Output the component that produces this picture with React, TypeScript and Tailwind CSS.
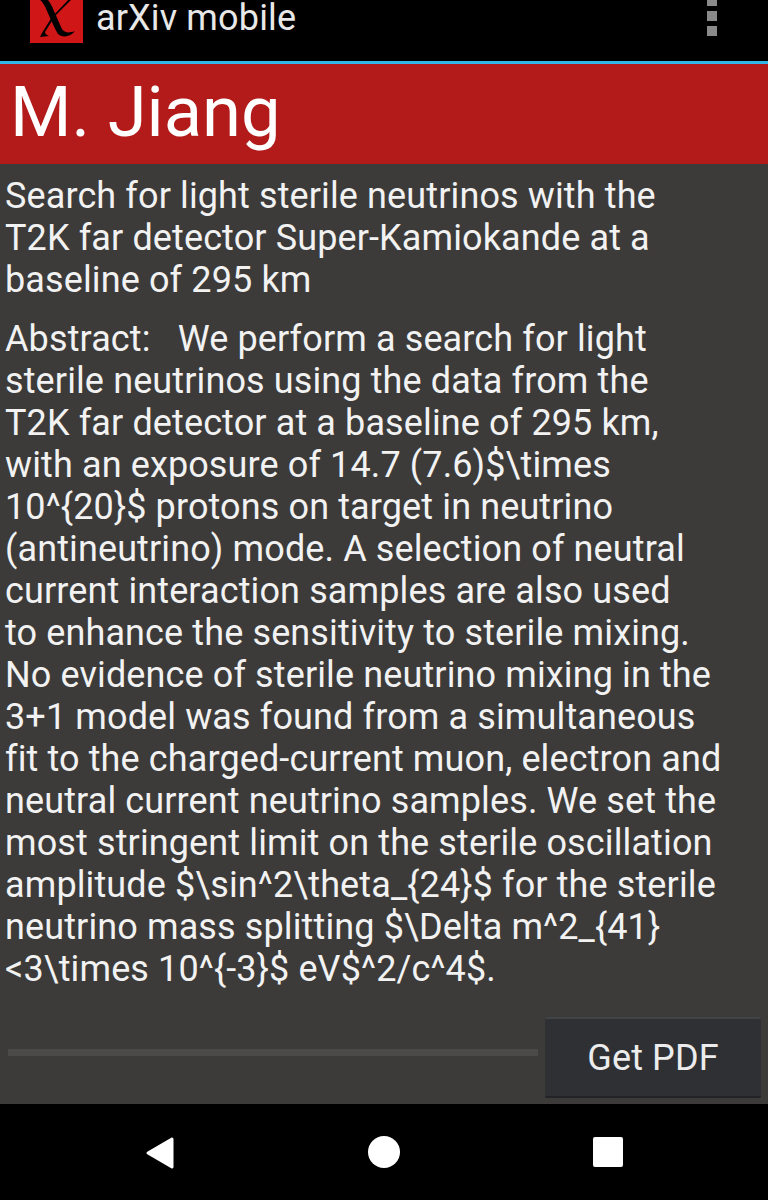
const lines = [
  "Abstract:\u00a0\u00a0 We perform a search for light",
  "sterile neutrinos using the data from the",
  "T2K far detector at a baseline of 295 km,",
  "with an exposure of 14.7 (7.6)$\\times",
  "10^{20}$ protons on target in neutrino",
  "(antineutrino) mode. A selection of neutral",
  "current interaction samples are also used",
  "to enhance the sensitivity to sterile mixing.",
  "No evidence of sterile neutrino mixing in the",
  "3+1 model was found from a simultaneous",
  "fit to the charged-current muon, electron and",
  "neutral current neutrino samples. We set the",
  "most stringent limit on the sterile oscillation",
  "amplitude $\\sin^2\\theta_{24}$ for the sterile",
  "neutrino mass splitting $\\Delta m^2_{41}",
  "<3\\times 10^{-3}$ eV$^2/c^4$.",
];

function Logo() {
  return (
    <svg width="53" height="43" viewBox="0 0 53 43" className="bg-[#d01616] shrink-0">
      <path d="M9 -1 H17 C20 2 22 6 24 11 L31 27 C33 32 37 34 45 31 C41 37 32 38 28 34 C25 29 21 20 17 11 C15 6 13 2 9 -1 Z" fill="#000" />
      <path d="M43 -2 L25 16 L15 32 C15 34 17 35 19 36 L10 37 L12 33 L22 17 L40 -2 Z" fill="#000" />
    </svg>
  );
}

export default function App() {
  return (
    <div className="w-[768px] h-[1200px] flex flex-col bg-[#3c3b3a] font-['Roboto',sans-serif] overflow-hidden">
      <header className="h-[61px] bg-black flex items-start pl-[30px] pr-[51px] shrink-0">
        <Logo />
        <span className="ml-[13px] text-[36px] leading-[36px] tracking-[0.15px] text-[#e8e8e8]">arXiv mobile</span>
        <div className="ml-auto flex flex-col gap-[5px] -mt-[4px]">
          <div className="w-[10px] h-[10px] bg-[#8a8a8a]" />
          <div className="w-[10px] h-[10px] bg-[#8a8a8a]" />
          <div className="w-[10px] h-[10px] bg-[#8a8a8a]" />
        </div>
      </header>
      <div className="h-[3px] bg-[#33b5e5] shrink-0" />
      <div className="h-[100px] bg-[#b31a1a] shrink-0 flex items-start pl-[10px] pt-[2px]">
        <h1 className="text-[70.5px] leading-[92px] text-white font-normal">M. Jiang</h1>
      </div>

      <main className="flex-1 flex flex-col px-[5px] pt-[11px] text-[36px] leading-[42px] tracking-[0.12px] text-[#f2f2f2]">
        <h2 className="font-normal whitespace-pre-line">
          {"Search for light sterile neutrinos with the\nT2K far detector Super-Kamiokande at a\nbaseline of 295 km"}
        </h2>
        <div className="mt-[17px]">
          {lines.map((line) => (
            <div key={line} className="whitespace-nowrap">{line}</div>
          ))}
        </div>
        <div className="mt-[27px] flex items-start gap-[7px] pl-[3px] pr-[2px]">
          <div className="flex-1 h-[7px] mt-[32px] bg-[#4b4a49]" />
          <button className="w-[216px] h-[81px] rounded-[2px] bg-[#2e3034] border-t-2 border-t-[#3f4447] border-b-2 border-b-[#222326] text-[36px] text-[#ececec]">
            Get PDF
          </button>
        </div>
      </main>

      <nav className="h-[96px] bg-black shrink-0">
        <svg width="768" height="96" viewBox="0 0 768 96">
          <path d="M172 35 L148 49 L172 63 Z" fill="#fff" stroke="#fff" strokeWidth="3" strokeLinejoin="round" />
          <circle cx="384" cy="48" r="16" fill="#fff" />
          <rect x="593" y="33" width="30" height="30" rx="2" fill="#fff" />
        </svg>
      </nav>
    </div>
  );
}
